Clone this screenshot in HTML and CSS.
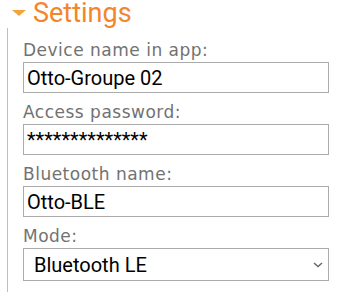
FILE: index.html
```html
<!DOCTYPE html>
<html>
<head>
<meta charset="utf-8">
<link rel="stylesheet" href="styles.css">
</head>
<body>
<div class="section-header">
  <span class="caret"></span>
  <h2 class="section-title">Settings</h2>
</div>
<div class="panel">
  <div class="field">
    <label class="field-label">Device name in app:</label>
    <input class="field-input" type="text" value="Otto-Groupe 02">
  </div>
  <div class="field">
    <label class="field-label">Access password:</label>
    <input class="field-input" type="text" value="**************">
  </div>
  <div class="field">
    <label class="field-label">Bluetooth name:</label>
    <input class="field-input" type="text" value="Otto-BLE">
  </div>
  <div class="field">
    <label class="field-label">Mode:</label>
    <div class="select-wrap">
      <select class="field-select">
        <option>Bluetooth LE</option>
      </select>
      <svg class="chevron" width="10" height="6" viewBox="0 0 10 6"><path d="M1 1 L5 4.5 L9 1" fill="none" stroke="#666" stroke-width="1.4"/></svg>
    </div>
  </div>
</div>
</body>
</html>
```

FILE: styles.css
```css
html, body {
  margin: 0;
  padding: 0;
  background: #fff;
}
body {
  width: 339px;
  height: 297px;
  overflow: hidden;
}
.section-header {
  display: flex;
  align-items: center;
  height: 26px;
  padding-left: 12px;
}
.caret {
  width: 0;
  height: 0;
  border-left: 7px solid transparent;
  border-right: 7px solid transparent;
  border-top: 6px solid #f5a23a;
}
.section-title {
  margin: 0 0 0 7px;
  font-family: Roboto, "Liberation Sans", sans-serif;
  font-weight: normal;
  font-size: 27px;
  line-height: 26px;
  color: #f5852a;
}
.panel {
  margin: 2px 0 0 7px;
  border-left: 1px solid #f2b65c;
  padding: 12px 10px 11px 15px;
}
.field {
  margin-bottom: 9px;
}
.field:last-child {
  margin-bottom: 0;
}
.field-label {
  display: block;
  font-family: "DejaVu Sans", Verdana, sans-serif;
  font-size: 17px;
  line-height: 20px;
  color: #727272;
  letter-spacing: 0.5px;
  margin-bottom: 2px;
}
.field-input {
  display: block;
  box-sizing: border-box;
  width: 306px;
  height: 31px;
  margin: 0;
  border: 1px solid #ababab;
  border-radius: 0;
  padding: 0 3px;
  font-family: Roboto, "Liberation Sans", sans-serif;
  font-size: 20px;
  color: #000;
  background: #fff;
  outline: none;
}
.select-wrap {
  position: relative;
  width: 306px;
}
.field-select {
  display: block;
  box-sizing: border-box;
  width: 306px;
  height: 33px;
  margin: 0;
  border: 1px solid #ababab;
  border-radius: 0;
  padding: 0 0 0 10px;
  font-family: Roboto, "Liberation Sans", sans-serif;
  font-size: 20px;
  color: #000;
  background: #fff;
  -webkit-appearance: none;
  appearance: none;
  outline: none;
}
.chevron {
  position: absolute;
  right: 6px;
  top: 14px;
}
```
